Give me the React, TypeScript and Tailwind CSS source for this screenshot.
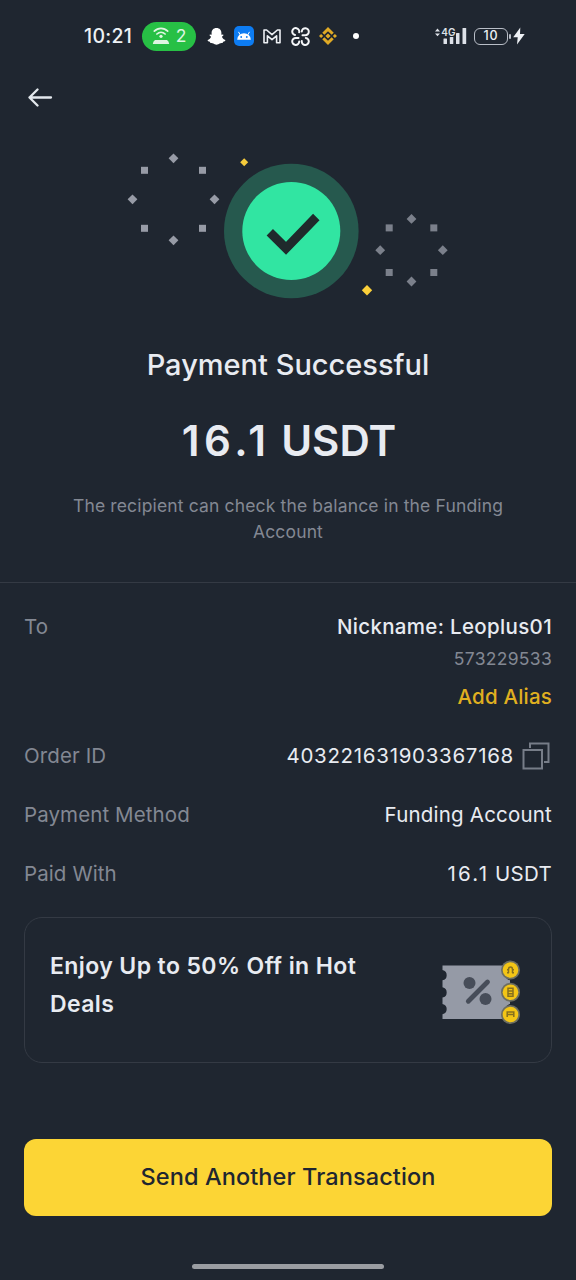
import type { ReactNode } from 'react';
import clsx from 'clsx';

interface DetailRowProps {
  label: string;
  children: ReactNode;
}

interface SparkleRingProps {
  cx: number;
  cy: number;
  r: number;
  corner: number;
  color: string;
}

function Diamond({ x, y, size, color }: { x: number; y: number; size: number; color: string }) {
  return <path d={`M${x} ${y - size}L${x + size} ${y}L${x} ${y + size}L${x - size} ${y}Z`} fill={color} />;
}

// Four diamonds on the axes and four squares on the diagonals
function SparkleRing({ cx, cy, r, corner, color }: SparkleRingProps) {
  const signs = [-1, 1];
  return (
    <g>
      {signs.map((s) => (
        <g key={s}>
          <Diamond x={cx + s * r} y={cy} size={4.9} color={color} />
          <Diamond x={cx} y={cy + s * r} size={4.9} color={color} />
          {signs.map((t) => (
            <rect key={t} x={cx + s * corner - 3.5} y={cy + t * corner - 3.5} width={7} height={7} fill={color} />
          ))}
        </g>
      ))}
    </g>
  );
}

function StatusBar() {
  return (
    <div className="flex h-[72px] items-center pl-[84px] text-[#eef1f5]">
      <span className="w-[58px] pt-[2px] text-[19.5px] font-medium tracking-[0.3px]">10:21</span>

      <div className="flex h-[29px] w-[54px] items-center justify-center gap-[6px] rounded-full bg-[#27c045]">
        <svg width="18" height="18" viewBox="0 0 18 18" fill="none" stroke="#dff5e2" strokeWidth="1.7" strokeLinecap="round">
          <path d="M2.3 4.2C6 .3 12 .3 15.7 4.2" />
          <path d="M4.9 7C7.3 4.7 10.7 4.7 13.1 7" />
          <circle cx="9" cy="9.3" r="1.6" fill="#dff5e2" stroke="none" />
          <path d="M3 13h12q1.8 1.2 2.2 4H.8Q1.2 14.2 3 13z" fill="#dff5e2" stroke="none" />
        </svg>
        <span className="pt-[1px] text-[17.5px] text-[#dff5e2]">2</span>
      </div>

      {/* Snapchat */}
      <svg className="ml-[11px]" width="19" height="19" viewBox="0 0 19 19" fill="#fff">
        <path d="M9.5 1C6.3 1 4.6 3.2 4.6 5.9v1.8l-1.7-.2c-.7.5-.3 1.3 1.2 2.2-.6 1.6-1.7 2.8-3.4 3.4-.4.8.5 1.4 2.2 1.7l.5 1.3c1-.2 2-.2 3 .5.9.7 1.8 1.2 3.1 1.2s2.2-.5 3.1-1.2c1-.7 2-.7 3-.5l.5-1.3c1.7-.3 2.6-.9 2.2-1.7-1.7-.6-2.8-1.8-3.4-3.4 1.5-.9 1.9-1.7 1.2-2.2l-1.7.2V5.9C14.4 3.2 12.7 1 9.5 1z" />
      </svg>

      {/* Android robot tile */}
      <svg className="ml-[8px]" width="20" height="20" viewBox="0 0 20 20">
        <rect width="20" height="20" rx="5" fill="#0d7cf2" />
        <path d="M3.2 13.7a6.8 6.5 0 0 1 13.6 0z" fill="#fff" />
        <path d="M6 8.5L4.7 6.2M14 8.5l1.3-2.3" stroke="#fff" strokeWidth="1" strokeLinecap="round" />
        <circle cx="7.2" cy="11" r=".9" fill="#0d7cf2" />
        <circle cx="12.8" cy="11" r=".9" fill="#0d7cf2" />
      </svg>

      {/* Gmail */}
      <svg className="ml-[9px]" width="18" height="15" viewBox="0 0 18 15" fill="none" stroke="#eef1f5" strokeWidth="1.6" strokeLinejoin="round">
        <path d="M1 1h2.6L9 5.6 14.4 1H17v12.8h-3.4V6.8L9 10.6 4.4 6.8v7H1z" />
      </svg>

      {/* Four open rings */}
      <svg className="ml-[10px]" width="19" height="19" viewBox="0 0 19 19" fill="none" stroke="#f4f6f8" strokeWidth="2" strokeLinecap="round">
        <path d="M4 8A3.5 3.5 0 1 1 8.2 5.3" />
        <path d="M10.8 4.5A3.5 3.5 0 1 1 14 8.2H11.5" />
        <path d="M7.5 10.9H5A3.5 3.5 0 1 0 8.2 14.5" />
        <path d="M14.8 11A3.5 3.5 0 1 1 10.8 14" />
      </svg>

      {/* Binance */}
      <svg className="ml-[9px]" width="18" height="18" viewBox="0 0 18 18" fill="none" stroke="#e0aa25" strokeWidth="3">
        <path d="M4.3 6.8L9 2.2l4.7 4.6M4.3 11.2L9 15.8l4.7-4.6" />
        <path d="M9 6.4L11.6 9 9 11.6 6.4 9zM2.1 6.9L4.2 9l-2.1 2.1L0 9zM15.9 6.9L18 9l-2.1 2.1L13.8 9z" fill="#e0aa25" stroke="none" />
      </svg>

      <span className="ml-[16px] size-[6px] rounded-full bg-white" />

      {/* Signal, battery, charging */}
      <div className="ml-[76px] flex items-center">
        <svg width="32" height="20" viewBox="0 0 32 20" fill="#dde1e8">
          <path d="M0 5.5L2.5 2.6 5 5.5zM0 7.5h5L2.5 10.3z" />
          <text x="6.3" y="9.5" fontSize="10" fontWeight="600" fontFamily="Inter, sans-serif">4G</text>
          <rect x="8.5" y="12.5" width="3.5" height="5.5" rx=".5" />
          <rect x="14.8" y="11" width="3.5" height="7" rx=".5" />
          <rect x="21" y="7" width="3.5" height="11" rx=".5" />
          <rect x="27.5" y="2" width="3.7" height="16" rx=".5" />
        </svg>
        <div className="ml-[7px] flex h-[17px] w-[34px] items-center justify-center rounded-[6px] border-[1.5px] border-[#b9bec7] pt-[1px] text-[12.5px] leading-none font-medium tracking-[0.8px]">
          10
        </div>
        <span className="ml-[1px] h-[5px] w-[1.5px] rounded-full bg-[#b9bec7]" />
        <svg className="ml-[2px]" width="12" height="18" viewBox="0 0 12 18" fill="#eef1f5">
          <path d="M7.3.5L.2 10.2h4.5L4 17.5l7.7-10.4H7z" />
        </svg>
      </div>
    </div>
  );
}

function SuccessArt() {
  return (
    <svg className="block" width="576" height="200" viewBox="0 122 576 200">
      <SparkleRing cx={173.5} cy={199.3} r={41} corner={29} color="#979ba6" />
      <SparkleRing cx={411.5} cy={250.2} r={31.3} corner={22.3} color="#7b808b" />
      <Diamond x={244.2} y={162.2} size={4} color="#f5cb3c" />
      <Diamond x={367} y={290.3} size={5.2} color="#fbd03a" />
      <circle cx="291.3" cy="231" r="67.3" fill="#26594e" />
      <circle cx="291.3" cy="231" r="49" fill="#31e5a2" />
      <path d="M269.8 232.2L286 248.3 316.3 217" fill="none" stroke="#1f2a2c" strokeWidth="9" />
    </svg>
  );
}

function CopyIcon() {
  return (
    <svg width="28" height="28" viewBox="0 0 28 28" fill="none" stroke="#777d88" strokeWidth="2">
      <rect x="1.5" y="8" width="18.5" height="18.5" />
      <path d="M8 6V1.5h18.5V20H22" />
    </svg>
  );
}

function CouponArt() {
  const coins = [13, 35.3, 57.5];
  return (
    <svg className="mt-[4px]" width="80" height="70" viewBox="0 0 80 70">
      <path
        d="M.5 8.5H68v4.6a5.2 5.2 0 0 0 0 10.2v7a5.2 5.2 0 0 0 0 10.2V47a5.2 5.2 0 0 0 0 10.2V62H.5v-4.800a5.2 5.2 0 0 0 0-10.2v-6.5a5.2 5.2 0 0 0 0-10.2v-7a5.2 5.2 0 0 0 0-10.2z"
        fill="#959aa6"
      />
      <circle cx="27.5" cy="26" r="6" fill="#474d59" />
      <circle cx="43.5" cy="42" r="6" fill="#474d59" />
      <path d="M26.3 44.2L45.5 25" stroke="#474d59" strokeWidth="4.8" strokeLinecap="round" />
      {coins.map((y) => (
        <g key={y}>
          <circle cx="68.5" cy={y} r="9.5" fill="#6d6e60" />
          <circle cx="68.5" cy={y} r="7.8" fill="#f3c516" />
        </g>
      ))}
      <g fill="none" stroke="#86701e" strokeWidth="1.5">
        <path d="M66.5 16v-3.500q0-2.500 2-2.500t2 2.500V16M65 12.800h1.500M70.500 12.800H72M65 15.800h2M70 15.800h2" />
        <path d="M66 31.3h5v8h-5zM66 34h5M66 36.7h5" />
        <path d="M65.2 60v-5h6.600v5M64.500 57.500h8" />
      </g>
    </svg>
  );
}

function DetailRow({ label, children }: DetailRowProps) {
  return (
    <div className="flex items-start justify-between text-[20.5px] leading-[30px]">
      <span className="tracking-[0.1px] text-[#838893]">{label}</span>
      <div className="flex items-center text-[#e8ebf1]">{children}</div>
    </div>
  );
}

export default function App() {
  return (
    <div className={clsx('flex h-[1280px] w-[576px] flex-col overflow-hidden bg-[#1f2630]', "font-['Inter',sans-serif]")}>
      <StatusBar />

      <header className="flex h-[50px] items-center pl-[28px]">
        <svg width="25" height="20" viewBox="0 0 25 20" fill="none" stroke="#e3e8ed" strokeWidth="2.3" strokeLinecap="round" strokeLinejoin="round">
          <path d="M23 10.5H1.5M9.5 2.5l-8 8 8 8" />
        </svg>
      </header>

      <section className="flex flex-col items-center border-b border-[#343a44] pb-[38px] text-center">
        <SuccessArt />
        <h1 className="mt-[23px] text-[29px] leading-[40px] font-medium text-[#e8ebf1]">Payment Successful</h1>
        <p className="mt-[31px] pl-[2px] text-[42px] leading-[50px] font-semibold text-[#e8ebf1]">
          <span className="tracking-[4.5px]">16.1</span> USDT
        </p>
        <p className="mt-[27px] text-[17.5px] leading-[25.5px] tracking-[0.15px] text-[#838893]">
          The recipient can check the balance in the Funding
          <br />
          Account
        </p>
      </section>

      <section className="flex flex-col gap-[29px] px-6 pt-[29px]">
        <DetailRow label="To">
          <div className="flex flex-col items-end">
            <span className="font-medium tracking-[0.33px]">Nickname: Leoplus01</span>
            <span className="mt-[4px] text-[17.5px] leading-[26px] tracking-[0.3px] text-[#838893]">573229533</span>
            <span className="mt-[10px] font-medium tracking-[0.2px] text-[#e0b020]">Add Alias</span>
          </div>
        </DetailRow>
        <DetailRow label="Order ID">
          <span className="tracking-[0.7px]">403221631903367168</span>
          <span className="mr-[2px] ml-[8px]">
            <CopyIcon />
          </span>
        </DetailRow>
        <DetailRow label="Payment Method">
          <span className="tracking-[0.2px]">Funding Account</span>
        </DetailRow>
        <DetailRow label="Paid With">
          <span>
            <span className="tracking-[2.2px]">16.1</span> <span className="tracking-[0.3px]">USDT</span>
          </span>
        </DetailRow>
      </section>

      <div className="mx-6 mt-[28px] flex h-[146px] items-center justify-between rounded-[18px] border border-[#343a44] pr-[29px] pl-[25px]">
        <p className="pb-[10px] text-[23px] leading-[38px] font-semibold tracking-[0.4px] text-[#e8ebf1]">
          Enjoy Up to 50% Off in Hot
          <br />
          Deals
        </p>
        <CouponArt />
      </div>

      <button className="mx-6 mt-[76px] h-[77px] rounded-[12px] bg-[#fcd535] pb-[2px] text-[23.5px] font-medium tracking-[0.1px] text-[#1f2630]">
        Send Another Transaction
      </button>

      <div className="mx-auto mt-[48px] h-[5px] w-[192px] rounded-full bg-[#9a9da2]" />
    </div>
  );
}
